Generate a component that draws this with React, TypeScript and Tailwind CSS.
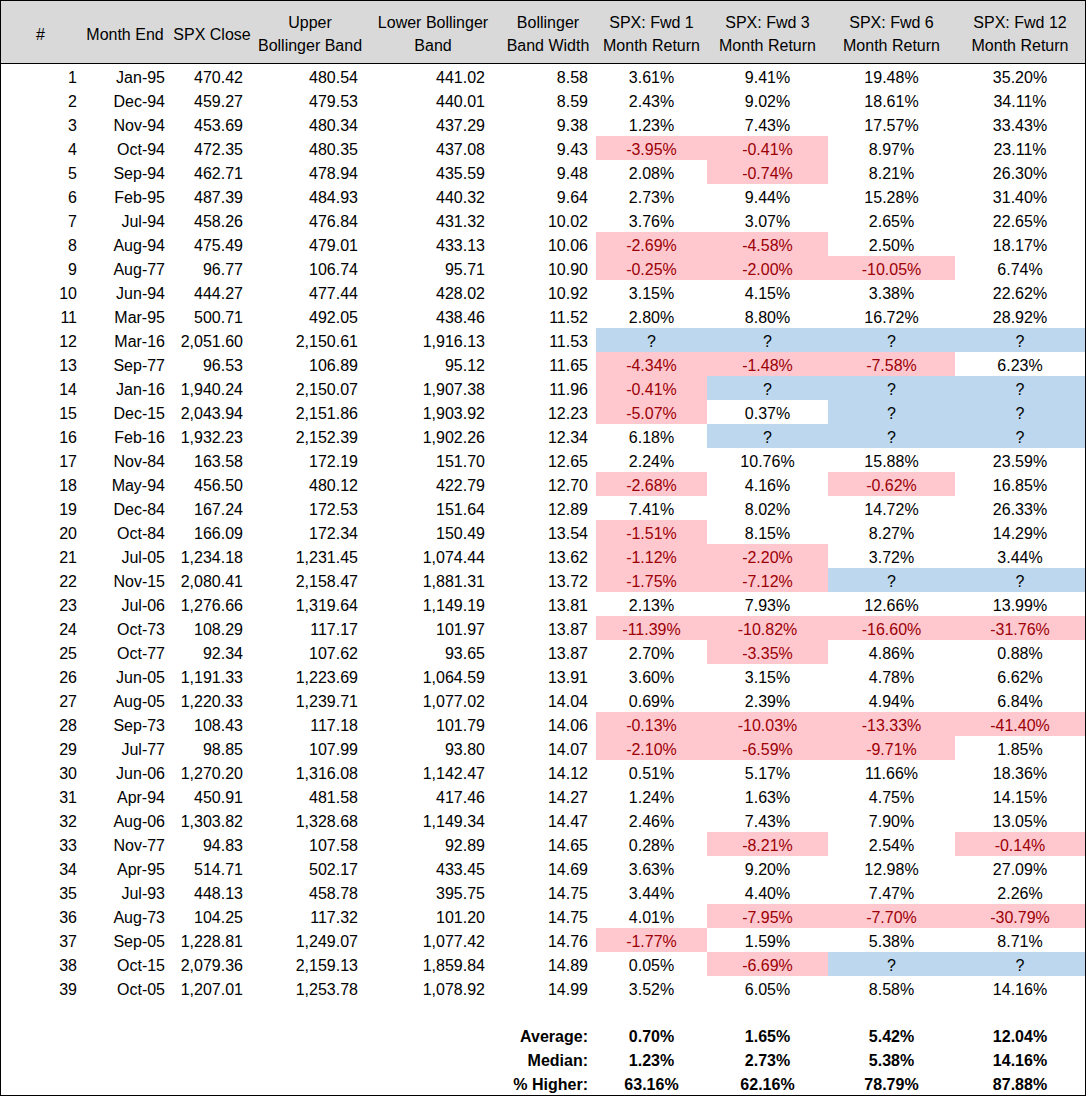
import React from "react";

type Row = [number, string, string, string, string, string, string, string, string, string];

const rows: Row[] = [
  [1, "Jan-95", "470.42", "480.54", "441.02", "8.58", "3.61%", "9.41%", "19.48%", "35.20%"],
  [2, "Dec-94", "459.27", "479.53", "440.01", "8.59", "2.43%", "9.02%", "18.61%", "34.11%"],
  [3, "Nov-94", "453.69", "480.34", "437.29", "9.38", "1.23%", "7.43%", "17.57%", "33.43%"],
  [4, "Oct-94", "472.35", "480.35", "437.08", "9.43", "-3.95%", "-0.41%", "8.97%", "23.11%"],
  [5, "Sep-94", "462.71", "478.94", "435.59", "9.48", "2.08%", "-0.74%", "8.21%", "26.30%"],
  [6, "Feb-95", "487.39", "484.93", "440.32", "9.64", "2.73%", "9.44%", "15.28%", "31.40%"],
  [7, "Jul-94", "458.26", "476.84", "431.32", "10.02", "3.76%", "3.07%", "2.65%", "22.65%"],
  [8, "Aug-94", "475.49", "479.01", "433.13", "10.06", "-2.69%", "-4.58%", "2.50%", "18.17%"],
  [9, "Aug-77", "96.77", "106.74", "95.71", "10.90", "-0.25%", "-2.00%", "-10.05%", "6.74%"],
  [10, "Jun-94", "444.27", "477.44", "428.02", "10.92", "3.15%", "4.15%", "3.38%", "22.62%"],
  [11, "Mar-95", "500.71", "492.05", "438.46", "11.52", "2.80%", "8.80%", "16.72%", "28.92%"],
  [12, "Mar-16", "2,051.60", "2,150.61", "1,916.13", "11.53", "?", "?", "?", "?"],
  [13, "Sep-77", "96.53", "106.89", "95.12", "11.65", "-4.34%", "-1.48%", "-7.58%", "6.23%"],
  [14, "Jan-16", "1,940.24", "2,150.07", "1,907.38", "11.96", "-0.41%", "?", "?", "?"],
  [15, "Dec-15", "2,043.94", "2,151.86", "1,903.92", "12.23", "-5.07%", "0.37%", "?", "?"],
  [16, "Feb-16", "1,932.23", "2,152.39", "1,902.26", "12.34", "6.18%", "?", "?", "?"],
  [17, "Nov-84", "163.58", "172.19", "151.70", "12.65", "2.24%", "10.76%", "15.88%", "23.59%"],
  [18, "May-94", "456.50", "480.12", "422.79", "12.70", "-2.68%", "4.16%", "-0.62%", "16.85%"],
  [19, "Dec-84", "167.24", "172.53", "151.64", "12.89", "7.41%", "8.02%", "14.72%", "26.33%"],
  [20, "Oct-84", "166.09", "172.34", "150.49", "13.54", "-1.51%", "8.15%", "8.27%", "14.29%"],
  [21, "Jul-05", "1,234.18", "1,231.45", "1,074.44", "13.62", "-1.12%", "-2.20%", "3.72%", "3.44%"],
  [22, "Nov-15", "2,080.41", "2,158.47", "1,881.31", "13.72", "-1.75%", "-7.12%", "?", "?"],
  [23, "Jul-06", "1,276.66", "1,319.64", "1,149.19", "13.81", "2.13%", "7.93%", "12.66%", "13.99%"],
  [24, "Oct-73", "108.29", "117.17", "101.97", "13.87", "-11.39%", "-10.82%", "-16.60%", "-31.76%"],
  [25, "Oct-77", "92.34", "107.62", "93.65", "13.87", "2.70%", "-3.35%", "4.86%", "0.88%"],
  [26, "Jun-05", "1,191.33", "1,223.69", "1,064.59", "13.91", "3.60%", "3.15%", "4.78%", "6.62%"],
  [27, "Aug-05", "1,220.33", "1,239.71", "1,077.02", "14.04", "0.69%", "2.39%", "4.94%", "6.84%"],
  [28, "Sep-73", "108.43", "117.18", "101.79", "14.06", "-0.13%", "-10.03%", "-13.33%", "-41.40%"],
  [29, "Jul-77", "98.85", "107.99", "93.80", "14.07", "-2.10%", "-6.59%", "-9.71%", "1.85%"],
  [30, "Jun-06", "1,270.20", "1,316.08", "1,142.47", "14.12", "0.51%", "5.17%", "11.66%", "18.36%"],
  [31, "Apr-94", "450.91", "481.58", "417.46", "14.27", "1.24%", "1.63%", "4.75%", "14.15%"],
  [32, "Aug-06", "1,303.82", "1,328.68", "1,149.34", "14.47", "2.46%", "7.43%", "7.90%", "13.05%"],
  [33, "Nov-77", "94.83", "107.58", "92.89", "14.65", "0.28%", "-8.21%", "2.54%", "-0.14%"],
  [34, "Apr-95", "514.71", "502.17", "433.45", "14.69", "3.63%", "9.20%", "12.98%", "27.09%"],
  [35, "Jul-93", "448.13", "458.78", "395.75", "14.75", "3.44%", "4.40%", "7.47%", "2.26%"],
  [36, "Aug-73", "104.25", "117.32", "101.20", "14.75", "4.01%", "-7.95%", "-7.70%", "-30.79%"],
  [37, "Sep-05", "1,228.81", "1,249.07", "1,077.42", "14.76", "-1.77%", "1.59%", "5.38%", "8.71%"],
  [38, "Oct-15", "2,079.36", "2,159.13", "1,859.84", "14.89", "0.05%", "-6.69%", "?", "?"],
  [39, "Oct-05", "1,207.01", "1,253.78", "1,078.92", "14.99", "3.52%", "6.05%", "8.58%", "14.16%"],
];

const grid =
  "grid grid-cols-[79px_90px_84px_112px_134px_96px_111px_121px_127px_130px]";

const headers: string[][] = [
  ["#"],
  ["Month End"],
  ["SPX Close"],
  ["Upper", "Bollinger Band"],
  ["Lower Bollinger", "Band"],
  ["Bollinger", "Band Width"],
  ["SPX: Fwd 1", "Month Return"],
  ["SPX: Fwd 3", "Month Return"],
  ["SPX: Fwd 6", "Month Return"],
  ["SPX: Fwd 12", "Month Return"],
];

function RetCell({ v }: { v: string }) {
  if (v === "?") {
    return (
      <div className="h-[24px] pt-[4px] leading-[20px] text-center bg-[#BDD7EE] text-black">
        ?
      </div>
    );
  }
  if (v.startsWith("-")) {
    return (
      <div className="h-[24px] pt-[4px] leading-[20px] text-center bg-[#FFC7CE] text-[#9C0006]">
        {v}
      </div>
    );
  }
  return <div className="h-[24px] pt-[4px] leading-[20px] text-center text-black">{v}</div>;
}

export default function App() {
  const summary: [string, string[]][] = [
    ["Average:", ["0.70%", "1.65%", "5.42%", "12.04%"]],
    ["Median:", ["1.23%", "2.73%", "5.38%", "14.16%"]],
    ["% Higher:", ["63.16%", "62.16%", "78.79%", "87.88%"]],
  ];
  return (
    <div
      className="w-[1087px] h-[1097px] bg-white text-black text-[16px] leading-[20px]"
      style={{ fontFamily: '"Liberation Sans", Arial, sans-serif' }}
    >
      <div className="w-[1086px] border border-black">
        <div className={`${grid} h-[63px] bg-[#D9D9D9] border-b border-black`}>
          {headers.map((h, i) => (
            <div
              key={i}
              className="flex flex-col items-center justify-center pt-[4px] leading-[23px] text-center whitespace-nowrap"
            >
              {h.map((l, j) => (
                <span key={j}>{l}</span>
              ))}
            </div>
          ))}
        </div>
        {rows.map((r) => (
          <div key={r[0]} className={`${grid} h-[24px] pt-[4px]`}>
            <div className="text-right pr-[3px]">{r[0]}</div>
            <div className="text-right pr-[5px]">{r[1]}</div>
            <div className="text-right pr-[11px]">{r[2]}</div>
            <div className="text-right pr-[8px]">{r[3]}</div>
            <div className="text-right pr-[15px]">{r[4]}</div>
            <div className="text-right pr-[8px]">{r[5]}</div>
            <div className="col-span-4 -mt-[4px] grid grid-cols-[111px_121px_127px_130px]">
              <RetCell v={r[6]} />
              <RetCell v={r[7]} />
              <RetCell v={r[8]} />
              <RetCell v={r[9]} />
            </div>
          </div>
        ))}
        <div className="h-[23px]" />
        {summary.map(([label, vals]) => (
          <div key={label} className={`${grid} h-[24px] pt-[4px] font-bold`}>
            <div />
            <div />
            <div />
            <div />
            <div />
            <div className="text-right pr-[8px]">{label}</div>
            {vals.map((v, i) => (
              <div key={i} className="text-center">
                {v}
              </div>
            ))}
          </div>
        ))}
      </div>
    </div>
  );
}
